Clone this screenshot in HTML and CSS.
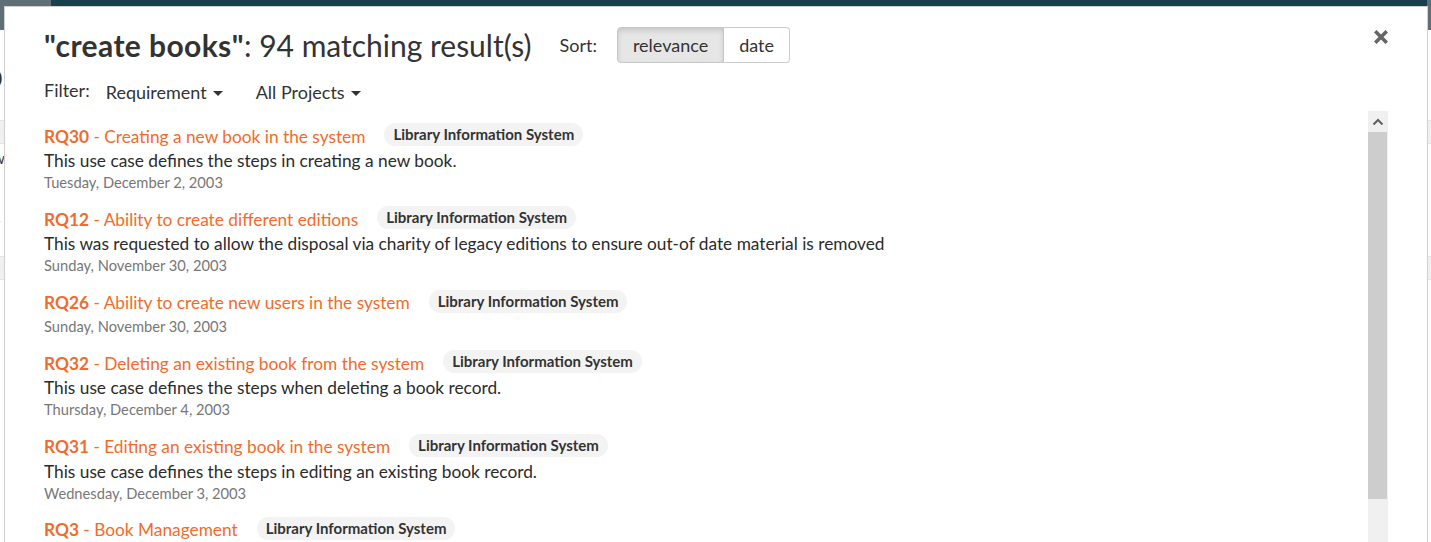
FILE: index.html
```html
<!DOCTYPE html>
<html lang="en">
<head>
<meta charset="utf-8">
<title>Search results</title>
<link rel="stylesheet" href="styles.css">
</head>
<body>
<div class="page">
  <div class="topbar">
    <div class="brand"></div>
    <div class="nav"></div>
    <div class="edge"></div>
  </div>
  <div class="page-body">
    <div class="pg-title">p</div>
    <div class="band"></div>
    <div class="pg-line">w</div>
    <div class="pg-line">t</div>
    <div class="pg-line link">c</div>
    <div class="pg-line">s</div>
    <div class="band"></div>
    <div class="pg-title small">(</div>
  </div>
</div>

<div class="modal">
  <div class="modal-header">
    <h2 class="title"><b>"create books"</b>: 94 matching result(s)</h2>
    <div class="sort">
      <span class="sort-label">Sort:</span>
      <div class="btn-group">
        <button class="btn active">relevance</button>
        <button class="btn">date</button>
      </div>
    </div>
    <button class="close" aria-label="Close">
      <svg width="14" height="14" viewBox="0 0 14 14"><path d="M2.5 2.5 L11.5 11.5 M11.5 2.5 L2.5 11.5" stroke="#666" stroke-width="3.6" stroke-linecap="square"/></svg>
    </button>
  </div>

  <div class="filters">
    <span class="filter-label">Filter:</span>
    <span class="dropdown">Requirement<span class="caret"></span></span>
    <span class="dropdown">All Projects<span class="caret"></span></span>
  </div>

  <div class="results-wrap">
    <ul class="results">
      <li class="result">
        <div class="r-head"><a class="r-title"><b>RQ30</b> - Creating a new book in the system</a><span class="badge">Library Information System</span></div>
        <div class="r-desc">This use case defines the steps in creating a new book.</div>
        <div class="r-date">Tuesday, December 2, 2003</div>
      </li>
      <li class="result">
        <div class="r-head"><a class="r-title"><b>RQ12</b> - Ability to create different editions</a><span class="badge">Library Information System</span></div>
        <div class="r-desc">This was requested to allow the disposal via charity of legacy editions to ensure out-of date material is removed</div>
        <div class="r-date">Sunday, November 30, 2003</div>
      </li>
      <li class="result">
        <div class="r-head"><a class="r-title"><b>RQ26</b> - Ability to create new users in the system</a><span class="badge">Library Information System</span></div>
        <div class="r-date">Sunday, November 30, 2003</div>
      </li>
      <li class="result">
        <div class="r-head"><a class="r-title"><b>RQ32</b> - Deleting an existing book from the system</a><span class="badge">Library Information System</span></div>
        <div class="r-desc">This use case defines the steps when deleting a book record.</div>
        <div class="r-date">Thursday, December 4, 2003</div>
      </li>
      <li class="result">
        <div class="r-head"><a class="r-title"><b>RQ31</b> - Editing an existing book in the system</a><span class="badge">Library Information System</span></div>
        <div class="r-desc">This use case defines the steps in editing an existing book record.</div>
        <div class="r-date">Wednesday, December 3, 2003</div>
      </li>
      <li class="result">
        <div class="r-head"><a class="r-title"><b>RQ3</b> - Book Management</a><span class="badge">Library Information System</span></div>
        <div class="r-desc">This use case covers the management of books in the library.</div>
        <div class="r-date">Monday, December 1, 2003</div>
      </li>
    </ul>
    <div class="scrollbar">
      <div class="sb-up">
        <svg width="12" height="8" viewBox="0 0 12 8"><path d="M1.5 6.5 L6 2 L10.5 6.5" fill="none" stroke="#606060" stroke-width="2"/></svg>
      </div>
      <div class="sb-thumb"></div>
      <div class="sb-track"></div>
    </div>
  </div>
</div>
</body>
</html>
```
FILE: styles.css
```css
* { box-sizing: border-box; }

html, body {
  margin: 0;
  height: 100%;
  overflow: hidden;
}

body {
  font-family: Lato, "Open Sans", sans-serif;
  color: #333;
  background: #fff;
}

/* background page, mostly hidden by the modal */
.page { height: 100%; }

.topbar {
  display: flex;
  height: 30px;
}
.brand { width: 51px; background: #5f6f76; }
.nav { flex: 1; background: #1a3f4c; }
.edge { width: 4px; background: #5f6f76; }

.page-body {
  display: flex;
  flex-direction: column;
  background: #fff;
}
.pg-title {
  font-size: 34px;
  line-height: 90px;
  margin-left: -16px;
  color: #333;
}
.pg-title.small { margin-top: 20px; line-height: 60px; }
.band {
  height: 24px;
  background: #f0f0f0;
  border-top: 1px solid #e4e4e4;
  border-bottom: 1px solid #e4e4e4;
}
.pg-line {
  font-size: 15px;
  line-height: 28px;
  margin-left: -7px;
  color: #333;
}
.pg-line.link { color: #337ab7; text-decoration: underline; }

/* modal */
.modal {
  position: fixed;
  left: 4px;
  right: 3px;
  top: 6px;
  bottom: -40px;
  background: #fff;
  border: 1px solid #cfcfcf;
  padding: 0 39px;
  display: flex;
  flex-direction: column;
}

.modal-header {
  display: flex;
  align-items: center;
  padding-top: 20px;
}

.title {
  margin: 0;
  font-size: 30px;
  line-height: 36px;
  font-weight: 400;
  color: #333;
}
.title b { font-weight: 700; letter-spacing: 0.4px; }

.sort {
  display: flex;
  align-items: center;
  margin-left: 28px;
}
.sort-label {
  font-size: 18px;
  margin-right: 20px;
}

.btn-group { display: flex; }
.btn {
  font-family: inherit;
  font-size: 18px;
  line-height: 22px;
  padding: 6px 15px;
  color: #333;
  background: #fff;
  border: 1px solid #ccc;
  margin: 0;
}
.btn:first-child { border-radius: 4px 0 0 4px; }
.btn:last-child { border-radius: 0 4px 4px 0; border-left: 0; }
.btn.active {
  background: #e6e6e6;
  border-color: #c6c6c6;
  box-shadow: inset 0 3px 5px rgba(0, 0, 0, 0.125);
}

.close {
  margin-left: auto;
  align-self: flex-start;
  margin-top: 3px;
  padding: 0;
  border: 0;
  background: none;
  width: 14px;
  height: 14px;
  display: flex;
}

.filters {
  display: flex;
  align-items: center;
  margin-top: 18px;
  font-size: 18px;
  line-height: 22px;
}
.filter-label { margin-right: 16px; position: relative; top: -2px; }
.dropdown {
  display: flex;
  align-items: center;
  margin-right: 33px;
}
.caret {
  width: 0;
  height: 0;
  margin-left: 6px;
  margin-top: 2px;
  border-top: 5px solid #333;
  border-left: 5px solid transparent;
  border-right: 5px solid transparent;
}

.results-wrap {
  display: flex;
  margin-top: 8px;
  flex: 1;
  min-height: 0;
}

.results {
  list-style: none;
  margin: 0;
  padding: 12px 0 0;
  flex: 1;
  overflow: hidden;
}

.result { margin-bottom: 14.4px; }

.r-head {
  display: flex;
  align-items: center;
  height: 26px;
}
.r-title {
  color: #f26b2a;
  font-size: 17.3px;
  line-height: 25px;
  cursor: pointer;
}
.r-title b { font-weight: 700; }

.badge {
  margin-left: 19px;
  margin-top: -3px;
  background: #f3f3f3;
  color: #333;
  font-size: 15px;
  font-weight: 700;
  line-height: 23px;
  padding: 0 9px;
  border-radius: 12px;
}

.r-desc {
  font-size: 17.3px;
  line-height: 23px;
  color: #2b2b2b;
}
.r-date {
  font-size: 14.7px;
  line-height: 20px;
  color: #777;
}

.scrollbar {
  width: 20px;
  display: flex;
  flex-direction: column;
  background: #f0f0f0;
}
.sb-up {
  height: 21px;
  display: flex;
  align-items: center;
  justify-content: center;
}
.sb-thumb {
  height: 367px;
  width: 19px;
  background: #cdcdcd;
}
.sb-track { flex: 1; }
```
